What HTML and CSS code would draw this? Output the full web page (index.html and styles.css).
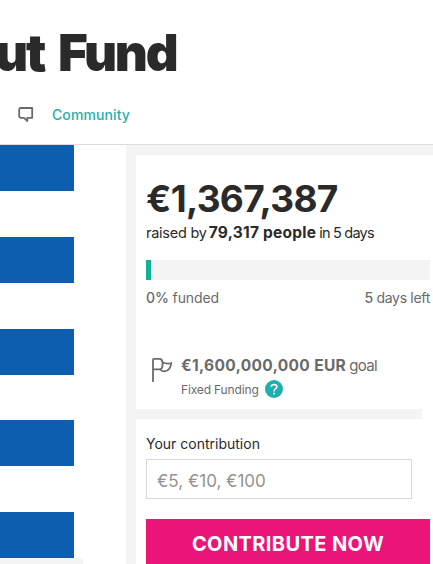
FILE: index.html
```html
<!DOCTYPE html>
<html lang="en">
<head>
    <meta charset="UTF-8">
    <meta name="viewport" content="width=device-width, initial-scale=1.0">
    <title>Fund</title>
    <link rel="stylesheet" href="styles.css">
</head>
<body>

    <header>
        <h1>ut Fund</h1>
        <nav>
            <svg class="chat" width="16" height="15" viewBox="0 0 16 15">
                <path d="M2 1H14.2V10.8H9.3V14L6 10.8H2.6L1.2 9.5V2Z" fill="none" stroke="#6a6a6a" stroke-width="1.8" stroke-linejoin="round"/>
            </svg>
            <a class="community">Community</a>
        </nav>
    </header>

    <main>
        <div class="gallery">
            <div class="flag">
                <div class="stripe"></div>
                <div class="stripe"></div>
                <div class="stripe"></div>
                <div class="stripe"></div>
                <div class="stripe"></div>
            </div>
            <div class="thumbs"></div>
        </div>

        <div class="sidebar">
            <section class="stats">
                <div class="amount">€1,367,387</div>
                <div class="raised"><span class="by">raised by</span><b>79,317 people</b><span class="in">in 5 days</span></div>
                <div class="bar"><div class="progress"></div></div>
                <div class="status">
                    <span class="funded"><b>0%</b> funded</span>
                    <span class="left"><b>5</b> days left</span>
                </div>
                <div class="goal">
                    <svg class="goal-flag" width="22" height="25" viewBox="0 0 22 25">
                        <path d="M2 25V2.5Q2 1.8 3 1.8H8.5Q11.2 1.8 11.5 5.3Q16 7.4 20.3 6Q19.3 13.8 13.5 14.3Q10.5 14.4 8.8 12.3H2M11.5 5.3V9.5Q11 11.8 8.8 12.3" fill="none" stroke="#6a6a6a" stroke-width="1.8" stroke-linejoin="round"/>
                    </svg>
                    <div>
                        <div class="goal-amount"><b>€1,600,000,000 EUR</b><span>goal</span></div>
                        <div class="funding">
                            <span>Fixed Funding</span>
                            <svg width="18" height="18" viewBox="0 0 18 18">
                                <circle cx="9" cy="9" r="9" fill="#1eafaf"/>
                                <path d="M6.2 6.7Q6.2 4.4 9 4.4Q11.9 4.4 11.9 6.7Q11.9 8 10.2 8.9Q9.1 9.5 9.1 11.4M9.1 12.7V14.4" fill="none" stroke="#fff" stroke-width="1.5"/>
                            </svg>
                        </div>
                    </div>
                </div>
            </section>
            <div class="divider"></div>
            <form class="contribute">
                <label for="contribution">Your contribution</label>
                <input id="contribution" type="text" placeholder="€5, €10, €100">
                <button type="button">CONTRIBUTE NOW</button>
            </form>
        </div>
    </main>

</body>
</html>
```
FILE: styles.css
```css
* {
    box-sizing: border-box;
}
body {
    margin: 0;
    width: 433px;
    height: 564px;
    overflow: hidden;
    font-family: Inter, "Liberation Sans", sans-serif;
    background-color: #fff;
    color: #2a2a2a;
}
header {
    height: 145px;
    border-bottom: 1px solid #dcdcdc;
    overflow: hidden;
}
h1 {
    margin: 22px 0 0 -5px;
    font-size: 51px;
    line-height: 62px;
    font-weight: 900;
    letter-spacing: -2.2px;
    word-spacing: 6px;
    white-space: nowrap;
}
nav {
    display: flex;
    align-items: center;
    height: 20px;
    margin-top: 20px;
    padding-left: 18px;
}
.community {
    margin-left: 18px;
    font-size: 14px;
    font-weight: 500;
    letter-spacing: 0.1px;
    color: #2aafac;
}
main {
    display: flex;
    height: 419px;
}
.gallery {
    width: 126px;
    flex: none;
}
.flag {
    display: flex;
    flex-direction: column;
    justify-content: space-between;
    width: 74px;
    height: 413px;
}
.stripe {
    height: 46px;
    background-color: #0d5eaf;
}
.thumbs {
    width: 83px;
    height: 6px;
    background-color: #f4f4f4;
}
.sidebar {
    flex: 1;
    min-width: 0;
    border-left: 10px solid #f4f4f4;
}
.stats {
    height: 264px;
    border-top: 10px solid #f4f4f4;
    padding: 23px 3px 0 10px;
    white-space: nowrap;
}
.amount {
    font-size: 37px;
    line-height: 42px;
    font-weight: 700;
    letter-spacing: -0.7px;
}
.raised {
    display: flex;
    line-height: 25px;
    font-size: 14.5px;
}
.raised b {
    margin: 0 3px 0 2px;
    font-size: 15.5px;
    letter-spacing: 0.25px;
}
.by {
    letter-spacing: -0.25px;
}
.in {
    letter-spacing: -0.8px;
}
.bar {
    height: 20px;
    margin-top: 15px;
    background-color: #f4f4f4;
}
.progress {
    width: 5px;
    height: 20px;
    background-color: #14b196;
}
.status {
    display: flex;
    justify-content: space-between;
    margin-top: 8px;
    font-size: 14px;
    line-height: 20px;
    letter-spacing: -0.1px;
    color: #6a6a6a;
}
.status b {
    font-weight: 500;
}
.left {
    letter-spacing: -0.3px;
}
.goal {
    display: flex;
    gap: 8px;
    margin-top: 48px;
    padding-left: 5px;
    color: #6a6a6a;
}
.goal-flag {
    flex: none;
    margin-top: 1px;
}
.goal-amount {
    display: flex;
    gap: 3px;
    font-size: 15px;
    line-height: 20px;
}
.goal-amount b {
    font-size: 15.5px;
    letter-spacing: 0.35px;
}
.goal-amount span {
    letter-spacing: -0.6px;
}
.funding {
    display: flex;
    align-items: center;
    gap: 6px;
    height: 26px;
    font-size: 12px;
    letter-spacing: -0.15px;
}
.divider {
    width: 286px;
    height: 10px;
    background-color: #f4f4f4;
}
.contribute {
    padding: 15px 3px 0 10px;
}
label {
    display: block;
    font-size: 14px;
    line-height: 20px;
}
input {
    display: block;
    width: 266px;
    height: 40px;
    margin: 5px 0 20px;
    padding: 3px 10px 0;
    border: 1px solid #d8d8d8;
    font-family: inherit;
    font-size: 17px;
}
input::placeholder {
    color: #929292;
}
button {
    display: block;
    width: 100%;
    height: 50px;
    padding: 0;
    border: none;
    background-color: #eb1478;
    color: #fff;
    font-family: inherit;
    font-size: 20px;
    font-weight: 700;
    letter-spacing: 0.4px;
}
```
